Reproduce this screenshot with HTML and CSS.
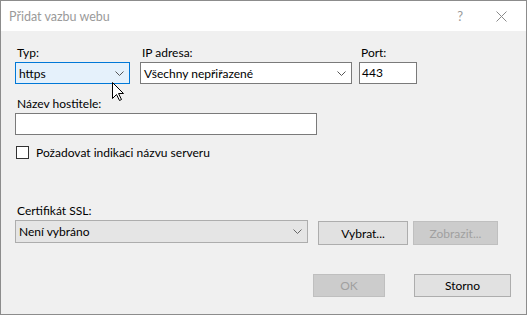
FILE: index.html
```html
<!DOCTYPE html>
<html lang="cs">
<head>
    <meta charset="UTF-8">
    <meta name="viewport" content="width=device-width, initial-scale=1.0">
    <title>Přidat vazbu webu</title>
    <link rel="stylesheet" href="styles.css">
</head>
<body>
    <div class="window">
        <div class="titlebar">
            <span class="title">Přidat vazbu webu</span>
            <span class="help">?</span>
            <svg class="close" width="11" height="11" viewBox="0 0 11 11">
                <path d="M0.5 0.5 L10.5 10.5 M10.5 0.5 L0.5 10.5" stroke="#8a8a8a" stroke-width="1" fill="none"/>
            </svg>
        </div>

        <div class="content">
            <div class="row-top">
                <div class="field type-field">
                    <div class="label">Typ:</div>
                    <div class="combo combo-hover">
                        <span>https</span>
                        <svg class="chevron" width="9" height="5" viewBox="0 0 9 5"><path d="M0.5 0.5 L4.5 4.5 L8.5 0.5" stroke="#555" fill="none"/></svg>
                    </div>
                </div>
                <div class="field ip-field">
                    <div class="label">IP adresa:</div>
                    <div class="combo">
                        <span>Všechny nepřiřazené</span>
                        <svg class="chevron" width="9" height="5" viewBox="0 0 9 5"><path d="M0.5 0.5 L4.5 4.5 L8.5 0.5" stroke="#555" fill="none"/></svg>
                    </div>
                </div>
                <div class="field port-field">
                    <div class="label">Port:</div>
                    <div class="textbox">443</div>
                </div>
            </div>

            <div class="field host-field">
                <div class="label">Název hostitele:</div>
                <div class="textbox"></div>
            </div>

            <div class="check">
                <span class="checkbox"></span>
                <span>Požadovat indikaci názvu serveru</span>
            </div>

            <div class="field ssl-field">
                <div class="label">Certifikát SSL:</div>
                <div class="ssl-row">
                    <div class="combo combo-list">
                        <span>Není vybráno</span>
                        <svg class="chevron" width="9" height="5" viewBox="0 0 9 5"><path d="M0.5 0.5 L4.5 4.5 L8.5 0.5" stroke="#666" fill="none"/></svg>
                    </div>
                    <button class="btn btn-select">Vybrat...</button>
                    <button class="btn btn-view" disabled>Zobrazit...</button>
                </div>
            </div>

            <div class="actions">
                <button class="btn btn-ok" disabled>OK</button>
                <button class="btn btn-cancel">Storno</button>
            </div>
        </div>

        <svg class="cursor" width="13" height="20" viewBox="0 0 13 20">
            <path d="M0.5 0.5 L0.5 16.5 L4.5 12.5 L7.5 18.5 L9.5 17.5 L6.5 11.5 L11.5 11.5 Z" fill="#fff" stroke="#000" stroke-width="1"/>
        </svg>
    </div>
</body>
</html>
```

FILE: styles.css
```css
* {
    box-sizing: border-box;
}
body {
    margin: 0;
    font-family: 'Lato', 'Noto Sans', sans-serif;
    font-size: 12px;
    color: #000000;
}
.window {
    position: relative;
    width: 527px;
    height: 315px;
    border: 1px solid #8c8c8c;
    background-color: #f0f0f0;
    display: flex;
    flex-direction: column;
}
.titlebar {
    height: 30px;
    background-color: #ffffff;
    display: flex;
    align-items: center;
    padding-left: 8px;
    flex-shrink: 0;
}
.title {
    font-size: 12.5px;
    color: #9a9a9a;
    flex: 1;
}
.help {
    font-size: 13px;
    color: #9a9a9a;
    margin-right: 33px;
}
.close {
    margin-right: 19px;
}
.content {
    flex: 1;
    padding: 14px 0 0 14px;
    display: flex;
    flex-direction: column;
}
.label {
    line-height: 15px;
    height: 15px;
    padding-left: 2px;
    margin-bottom: 2px;
}
.row-top {
    display: flex;
}
.type-field {
    width: 115px;
    margin-right: 10px;
}
.ip-field {
    width: 212px;
    margin-right: 7px;
}
.port-field {
    width: 58px;
}
.combo {
    height: 22px;
    border: 1px solid #7a7a7a;
    background-color: #ffffff;
    display: flex;
    align-items: center;
    justify-content: space-between;
    padding: 0 5px 0 3px;
}
.combo-hover {
    border-color: #0078d7;
    background-color: #e5f1fb;
}
.combo-list {
    width: 293px;
    height: 23px;
    border-color: #adadad;
    background-color: #e5e5e5;
}
.textbox {
    height: 22px;
    border: 1px solid #7a7a7a;
    background-color: #ffffff;
    line-height: 20px;
    padding-left: 2px;
}
.host-field {
    margin-top: 12px;
    width: 302px;
}
.check {
    display: flex;
    align-items: center;
    margin-top: 10px;
    margin-left: 1px;
    line-height: 15px;
}
.checkbox {
    width: 13px;
    height: 13px;
    border: 1px solid #333333;
    background-color: #ffffff;
    margin-right: 7px;
}
.ssl-field {
    margin-top: 43px;
}
.ssl-row {
    display: flex;
    align-items: flex-start;
}
.btn {
    font-family: inherit;
    font-size: 12px;
    height: 24px;
    border: 1px solid #adadad;
    background-color: #e1e1e1;
    color: #000000;
    padding: 0;
}
.btn:disabled {
    background-color: #cccccc;
    border-color: #bfbfbf;
    color: #a0a0a0;
}
.btn-select {
    width: 90px;
    margin-left: 10px;
    margin-top: 1px;
}
.btn-view {
    width: 85px;
    margin-left: 5px;
    margin-top: 1px;
}
.actions {
    display: flex;
    margin-top: 29px;
    padding-left: 298px;
}
.btn-ok {
    width: 72px;
    height: 23px;
}
.btn-cancel {
    width: 97px;
    height: 23px;
    margin-left: 29px;
}
.cursor {
    position: absolute;
    left: 111px;
    top: 81px;
}
```
